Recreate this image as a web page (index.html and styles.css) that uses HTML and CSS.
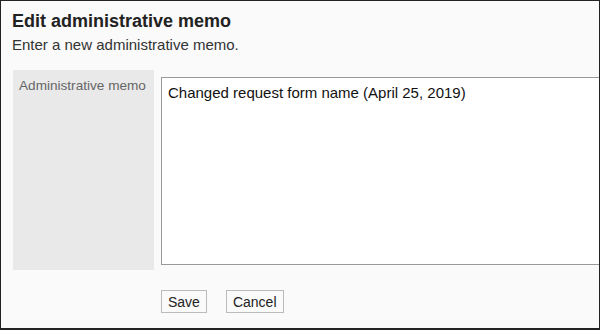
FILE: index.html
```html
<!DOCTYPE html>
<html>
<head>
<meta charset="utf-8">
<link rel="stylesheet" href="styles.css">
</head>
<body>
<div class="frame">
  <h1 class="title">Edit administrative memo</h1>
  <p class="desc">Enter a new administrative memo.</p>
  <div class="form-row">
    <div class="label-cell">Administrative memo</div>
    <div class="field-cell">
      <div class="memo">Changed request form name (April 25, 2019)</div>
    </div>
  </div>
  <div class="actions">
    <button class="btn">Save</button>
    <button class="btn">Cancel</button>
  </div>
</div>
</body>
</html>
```

FILE: styles.css
```css
html, body {
  margin: 0;
  padding: 0;
  background: #fafafa;
}
body {
  font-family: "Liberation Sans", Arial, sans-serif;
  color: #333;
}
.frame {
  box-sizing: border-box;
  width: 600px;
  height: 330px;
  border: 1px solid #222;
  border-bottom-width: 2px;
  background: #fafafa;
  overflow: hidden;
  padding: 9px 0 0 11px;
}
.title {
  margin: 0;
  font-size: 18px;
  font-weight: bold;
  line-height: 22px;
  color: #222;
}
.desc {
  margin: 4px 0 0;
  font-size: 15px;
  line-height: 18px;
  color: #333;
}
.form-row {
  display: flex;
  margin-top: 16px;
  margin-left: 1px;
}
.label-cell {
  flex: none;
  width: 141px;
  height: 200px;
  box-sizing: border-box;
  background: #e9e9e9;
  color: #666;
  font-size: 13.6px;
  line-height: 17px;
  padding: 7px 0 0 6px;
}
.field-cell {
  flex: none;
  padding: 7px 0 0 7px;
}
.memo {
  box-sizing: border-box;
  width: 440px;
  height: 188px;
  background: #fff;
  border: 1px solid #999;
  font-size: 15px;
  line-height: 18px;
  color: #111;
  padding: 6px 6px;
}
.actions {
  display: flex;
  gap: 19px;
  margin: 20px 0 0 149px;
}
.btn {
  font-family: "Liberation Sans", Arial, sans-serif;
  font-size: 14px;
  height: 23px;
  padding: 0 6px;
  background: #fafafa;
  border: 1px solid #bbb;
  border-radius: 0;
  color: #222;
  margin: 0;
}
```
